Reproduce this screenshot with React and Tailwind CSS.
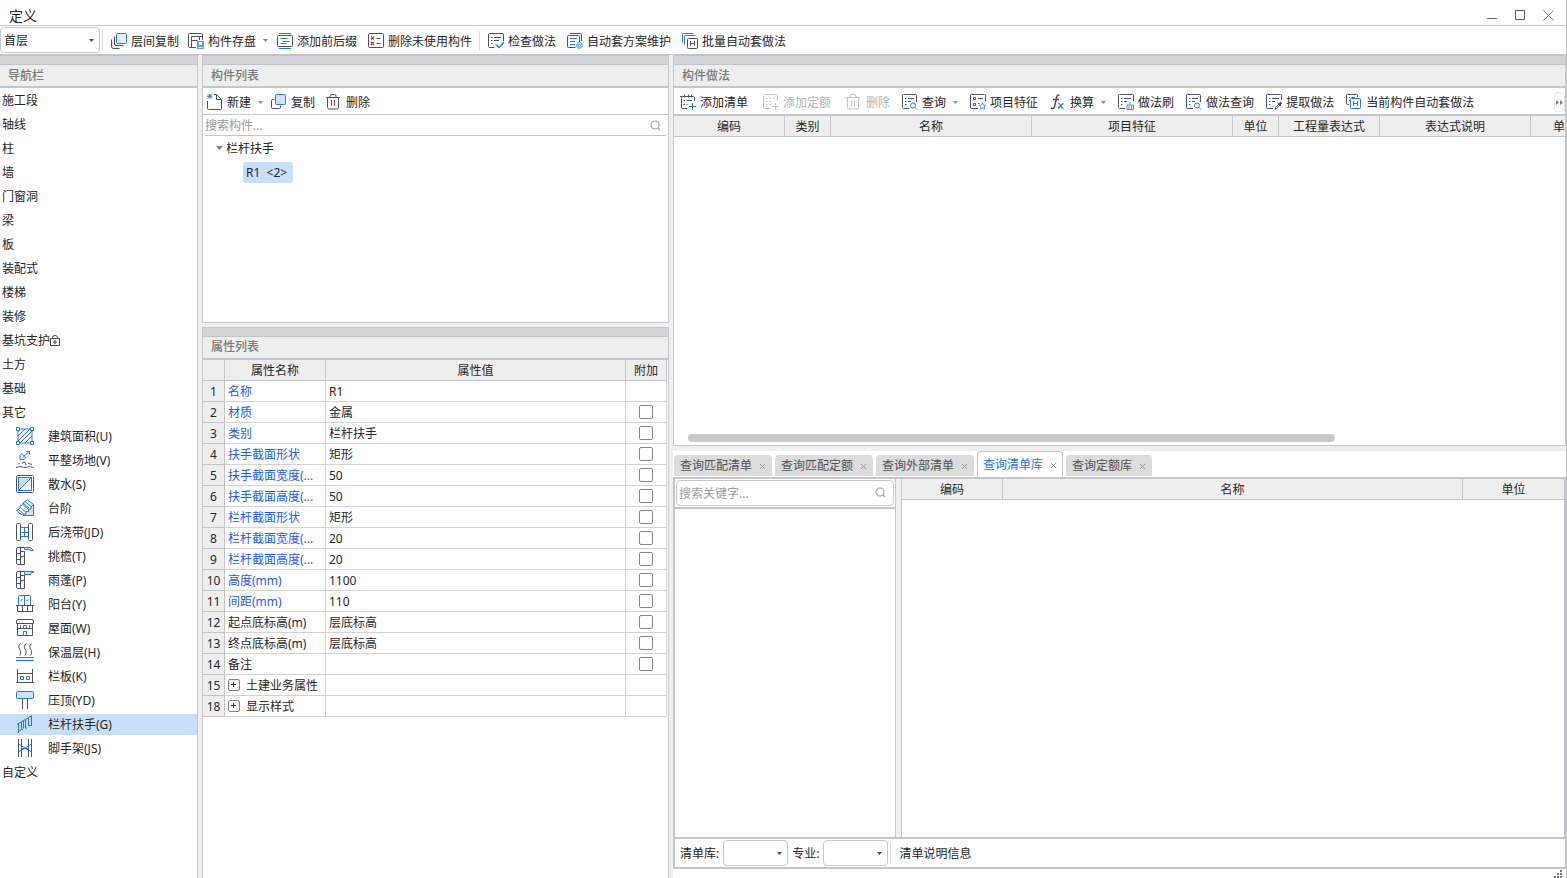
import { useState } from 'react';

const DARK = '#4b5068';
const BLUE = '#1f78e6';
const PALE = '#cfe1fb';

const Svg = ({ size = 16, children }) => (
  <svg
    width={size}
    height={size}
    viewBox={`0 0 ${size} ${size}`}
    fill="none"
    stroke={DARK}
    className="shrink-0"
    aria-hidden="true"
  >
    {children}
  </svg>
);

const Caret = ({ color = '#8a8a8a' }) => (
  <svg width="5" height="3" viewBox="0 0 5 3" className="shrink-0" aria-hidden="true">
    <path d="M0 0h5L2.500 3z" fill={color} />
  </svg>
);

const SearchIcon = () => (
  <svg width="11" height="11" viewBox="0 0 11 11" fill="none" stroke="#a3a3a3" className="shrink-0" aria-hidden="true">
    <circle cx="5" cy="5" r="4" strokeWidth="1.200" />
    <path d="M8 8l2 2" strokeWidth="1.400" />
  </svg>
);

const icons = {
  floorCopy: (
    <Svg>
      <path d="M3.500 3.500v7.500a1.500 1.500 0 0 0 1.500 1.500h7.500M.5 6.500v7a2 2 0 0 0 2 2h6" />
      <rect x="5.500" y=".5" width="10" height="10" rx="1" fill="#e3eefd" stroke={BLUE} />
    </Svg>
  ),
  save: (
    <Svg>
      <path d="M8 14.500H1.500a1 1 0 0 1-1-1v-12a1 1 0 0 1 1-1h12a1 1 0 0 1 1 1V7M3.500 14V3.500h8V7M3.500 7.500h6M11.500 3.500h3" />
      <path d="M9 8h7v8H9z" fill="#5b9cf0" stroke="none" />
      <path d="M11 9h3v3h-3zM10.500 14h4v1h-4z" fill="#fff" stroke="none" />
    </Svg>
  ),
  prefix: (
    <Svg>
      <rect x=".5" y="2.500" width="15" height="11" rx="1" />
      <path d="M2 .5h12M2 15.500h12M3.500 5.500h7M5.500 8.500h7M3.500 10.500h6" stroke={BLUE} />
    </Svg>
  ),
  removeUnused: (
    <Svg>
      <rect x=".5" y=".5" width="15" height="14" rx="1" />
      <path d="M8.500 5.500h4M8.500 10.500h4" />
      <path d="M3 3.500l3 3m0-3l-3 3M3 9l3 3m0-3l-3 3" stroke="#d93030" strokeWidth="1.200" />
    </Svg>
  ),
  check: (
    <Svg>
      <path d="M6.500 14.500h-5a1 1 0 0 1-1-1v-12a1 1 0 0 1 1-1h13a1 1 0 0 1 1 1V8M3 4.500h1.500M3 7.500h1.500M3 10.500h1.500M6 4.500h7M6 7.500h5" />
      <path d="M8 11.500l3 3 5-5" stroke={BLUE} strokeWidth="1.500" />
    </Svg>
  ),
  scheme: (
    <Svg>
      <path d="M8.500 14.500H1.500a1 1 0 0 1-1-1V3.500a1 1 0 0 1 1-1h10a1 1 0 0 1 1 1V9M3 .5h10.500a1 1 0 0 1 1 1V8" />
      <path d="M3 5.500h7M3 8.500h5M3 11.500h5" stroke={BLUE} />
      <circle cx="12.500" cy="12.500" r="3" fill="#a9cbf7" stroke="#5b9cf0" strokeDasharray="1.500 .8" />
      <circle cx="12.500" cy="12.500" r="1" fill="#fff" stroke="#5b9cf0" />
    </Svg>
  ),
  batch: (
    <Svg>
      <path d="M.5 9.500V1.500a1 1 0 0 1 1-1h10M2.500 11.500V3.500a1 1 0 0 1 1-1h10" stroke={BLUE} />
      <rect x="5.500" y="5.500" width="10" height="10" rx="1" fill="#fff" />
      <path d="M8.500 8v5M12.500 8v5M8.500 10.500h4" />
    </Svg>
  ),
  create: (
    <Svg>
      <path d="M.5 7v7.500a1 1 0 0 0 1 1h12a1 1 0 0 0 1-1V5.500l-5-5H7M9.500 1v4.500h5" />
      <path d="M.5 0l4.500 4.500M5 0L.5 4.500M0 2.300h5.500M2.800 0v5" stroke={BLUE} strokeWidth=".9" />
    </Svg>
  ),
  copy: (
    <Svg>
      <path d="M3.500 5.500h-2a1 1 0 0 0-1 1v7a1 1 0 0 0 1 1h7a1 1 0 0 0 1-1v-2" />
      <rect x="4.500" y=".5" width="10" height="10" rx="1" fill={PALE} stroke={BLUE} />
    </Svg>
  ),
  trash: (
    <Svg>
      <path d="M0 3.500h14M1.500 3.500v10a1.500 1.500 0 0 0 1.500 1.500h8a1.500 1.500 0 0 0 1.500-1.500v-10M4 3V2a1.500 1.500 0 0 1 1.500-1.500h3A1.500 1.500 0 0 1 10 2v1" />
      <path d="M5.500 6v6M8.500 6v6" stroke="#d93030" />
    </Svg>
  ),
  trashOff: (
    <Svg>
      <path
        d="M0 3.500h14M1.500 3.500v10a1.500 1.500 0 0 0 1.500 1.500h8a1.500 1.500 0 0 0 1.500-1.500v-10M4 3V2a1.500 1.500 0 0 1 1.500-1.500h3A1.500 1.500 0 0 1 10 2v1M5.500 6v6M8.500 6v6"
        stroke="#c3c3c3"
      />
    </Svg>
  ),
  addList: (
    <Svg>
      <path d="M7 14.500H2.500a1 1 0 0 1-1-1v-10a1 1 0 0 1 1-1h11a1 1 0 0 1 1 1V7M0 2.500h2M4.500.5v3M8.500.5v3M11.500.5v3M3.500 6.500h1.500M3.500 10.500h1.500M6.500 6.500H12M6.500 10.500h1" />
      <path d="M12.500 9v7M9 12.500h7" stroke={BLUE} />
    </Svg>
  ),
  addQuota: (
    <Svg>
      <path
        d="M7.500 14.500h-6a1 1 0 0 1-1-1v-12a1 1 0 0 1 1-1h12a1 1 0 0 1 1 1V7M3 4.500h1.500M6.500 4.500H8M10 4.500h1.500M3 7.500h1.500M6.500 7.500H8M3 10.500h1.500M6.500 10.500H8M12.500 9v7M9 12.500h7"
        stroke="#c3c3c3"
      />
    </Svg>
  ),
  query: (
    <Svg>
      <path d="M7 14.500H1.500a1 1 0 0 1-1-1v-12a1 1 0 0 1 1-1h12a1 1 0 0 1 1 1V8M3 4.500h1.500M3 7.500h1.500M3 10.500h1.500M6 4.500h6M6 7.500h3" />
      <circle cx="11" cy="11.500" r="2.500" stroke={BLUE} />
      <path d="M13 13.500l2 2" stroke={BLUE} />
    </Svg>
  ),
  feature: (
    <Svg>
      <path d="M8 14.500H1.500a1 1 0 0 1-1-1v-12a1 1 0 0 1 1-1h13a1 1 0 0 1 1 1V7M8 4.500h5M8 9.500h1.500" />
      <path d="M3.500 3.500h2v2h-2zM3.500 9.500h2v2h-2z" />
      <path d="M12.500 8.800l1 2.200 2.300.3-1.700 1.600.4 2.400-2-1.200-2 1.200.4-2.400-1.700-1.600 2.300-.3z" stroke="#4a93ef" />
    </Svg>
  ),
  convert: (
    <Svg>
      <path d="M9.500 1.500C7.500 0 6.800 2 6.300 4.500L4.700 12c-.5 2.500-1.700 3.200-3.700 2M3 5.500h6" strokeWidth="1.500" />
      <path d="M8 9.500c3-.8 2.500 5.500 5.500 4.500M13.500 9.500c-2 0-3.500 4.500-5.500 4.500" stroke={BLUE} strokeWidth="1.300" />
    </Svg>
  ),
  brush: (
    <Svg>
      <path d="M7 14.500H1.500a1 1 0 0 1-1-1v-12a1 1 0 0 1 1-1h13a1 1 0 0 1 1 1V7M3 4.500h1.500M3 7.500h1.500M3 10.500h1.500M6 4.500h7M6 7.500h3" />
      <path d="M12 8v2.500M9 11h6.500v4.500H9zM11 12v3.500M13.500 12v3.500" stroke="#4a8be8" />
    </Svg>
  ),
  extract: (
    <Svg>
      <path d="M7 14.500H1.500a1 1 0 0 1-1-1v-12a1 1 0 0 1 1-1h13a1 1 0 0 1 1 1V6M3 4.500h1.500M3 7.500h1.500M3 10.500h1.500M6 4.500h7M6 7.500h3" />
      <path d="M9 15.500l.5-2 3.500-3.500 1 1-3.500 3.500zM11.500 9l3.500 3" />
      <path d="M12.500 10l2-2 1.300 1.200-2 2z" fill={DARK} />
    </Svg>
  ),
  auto: (
    <Svg>
      <path d="M3 10.500H1.500a1 1 0 0 1-1-1v-8a1 1 0 0 1 1-1h9a1 1 0 0 1 1 1V3M3 3.500h1M5.500 3.500h3M3 6.500h1" />
      <rect x="4.500" y="4.500" width="10" height="10" rx="1" fill="#fff" stroke={BLUE} />
      <path d="M7.500 7v5M11.500 7v5M7.500 9.500h4" stroke={BLUE} />
    </Svg>
  ),
  area: (
    <Svg size={18}>
      <path d="M2 2h14v14H2zM2 9l7-7M2 14L14 2M4 16L16 4M9 16l7-7" stroke={BLUE} />
      <path d="M.5.500h3v3h-3zM14.500.500h3v3h-3zM.5 14.500h3v3h-3zM14.500 14.500h3v3h-3z" fill="#fff" stroke={BLUE} />
    </Svg>
  ),
  ground: (
    <Svg size={18}>
      <path d="M5.500 2.500l-1.500 2v4h4l2-2zM7.500 5.500l5.500-5M10.500.5h3v3" stroke={BLUE} fill="#eaf2fd" />
      <path d="M0 16.500c2.500 0 2.500-1 4-1s2.500 1 5 1 3-1 4.500-1 2 1 4.500 1M2 13.500l1.500-1.500M6 12.500l2-1.500 2 1.500M9 14l1.500-.5M12 12l2 1 2 .5" />
    </Svg>
  ),
  apron: (
    <Svg size={18}>
      <rect x=".5" y=".5" width="17" height="17" rx="1" />
      <path d="M2.500 15.500v-13h13z" fill={PALE} />
      <path d="M2.500 2.500h13v13h-13zM2.500 15.500l13-13" stroke={BLUE} />
    </Svg>
  ),
  stairs: (
    <Svg size={18}>
      <path d="M7 16.500h10.500V5.500L15 8v2h-2.500v2.500H10V15H7z" fill={PALE} stroke={BLUE} />
      <path
        d="M11.500 1L7 4v1.500L4 7v2L.5 11.500 6 16M11.500 1l6 4.500M7 4l6 5M4 8l5.500 5M7 5.500l5.500 5M9 2.500l6 5M2 10l5.500 5"
        stroke={BLUE}
      />
    </Svg>
  ),
  strip: (
    <Svg size={18}>
      <rect x=".5" y=".5" width="4" height="17" rx="1" />
      <rect x="12.500" y=".5" width="4" height="17" rx="1" />
      <path d="M4.500 4.500h8M4.500 9.500h8M4.500 13.500h8M8.500 4v10" stroke={BLUE} />
    </Svg>
  ),
  eave: (
    <Svg size={18}>
      <path d="M8.500 4v13.500H2A1.500 1.500 0 0 1 .5 16V2A1.500 1.500 0 0 1 2 .5h6M4.500.5v17M.5 6.500h4M.5 12.500h4M4.500 4.500h4M4.500 9.500h4" />
      <path d="M8.500.5h6l3 3H15l-2-1H8.500z" fill={PALE} stroke={BLUE} />
    </Svg>
  ),
  canopy: (
    <Svg size={18}>
      <path d="M8.500 4v13.500H2A1.500 1.500 0 0 1 .5 16V2A1.500 1.500 0 0 1 2 .5h6M4.500.5v17M.5 6.500h4M.5 12.500h4M4.500 4.500h4M4.500 9.500h4" />
      <path d="M8.500.5h9v1h-2l-1 2h-6z" fill={PALE} stroke={BLUE} />
    </Svg>
  ),
  balcony: (
    <Svg size={18}>
      <path d="M2.500 10V1.500a1 1 0 0 1 1-1h10a1 1 0 0 1 1 1V10M8.500.5V10M4.500 6l2-2M10.500 6l2-2" stroke={BLUE} />
      <path d="M0 10.500h18M1 16.500h16M1.500 10.500v6M6.500 10.500v6M11.500 10.500v6M16.500 10.500v6" />
    </Svg>
  ),
  roof: (
    <Svg size={18}>
      <path d="M2 .5h14a1.500 1.500 0 0 1 1.500 1.500v2.500h-17V2A1.500 1.500 0 0 1 2 .5zM1.500 4v12.500h15V4M1.500 9.500h15" />
      <path d="M4.500 6v3.500M7.500 9.500v-3h3v3M13.500 6v3.500M7.500 16.500v-4h3v4" stroke={BLUE} />
    </Svg>
  ),
  heat: (
    <Svg size={18}>
      <path d="M4.500.500c-5 4.500 3 6.500-1 12M10 .5c-5 4.500 3 6.500-1 12M15.500.500c-5 4.500 3 6.500-1 12" />
      <path d="M0 14.500h18M0 17.500h18" stroke={BLUE} />
    </Svg>
  ),
  railBoard: (
    <Svg size={18}>
      <path d="M1.500 2v13.500M16.500 2v13.500M1.500 6.500h15M0 15.500h18" />
      <path d="M4.500 9.500h3v3h-3zM10.500 9.500h3v3h-3z" stroke={BLUE} />
    </Svg>
  ),
  coping: (
    <Svg size={18}>
      <path d="M6.500 7.500V18M11.500 7.500V18" />
      <rect x=".5" y=".5" width="17" height="7" rx="1" fill={PALE} stroke={BLUE} />
    </Svg>
  ),
  handrail: (
    <Svg size={18}>
      <path
        d="M1 9.500L16 .5M2.500 8.500v9M5.500 7v7.500M9.500 4.500v8.500M12.500 3v7.500M15.500 1v9.500M1.500 17.500h1.500M5 14.500h2M9 13h2M12 10.500h3.500M3 16l2.500-1.500M7.500 6v7.500"
        stroke={BLUE}
      />
    </Svg>
  ),
  scaffold: (
    <Svg size={18}>
      <path d="M2.500 0v18M5.500 0v18M12.500 0v18M15.500 0v18" />
      <path d="M2.500 5l13 8M2.500 13l13-8M5.500 9.500h7" stroke={BLUE} />
    </Svg>
  ),
  lock: (
    <svg width="10" height="12" viewBox="0 0 10 12" fill="none" stroke="#444" aria-hidden="true">
      <path d="M.5 3.500h9v7h-9zM2.500 3.500v-1a2.500 2 0 0 1 5 0v1M5 5v4M3 7h4" />
    </svg>
  )
};

const categories = ['施工段', '轴线', '柱', '墙', '门窗洞', '梁', '板', '装配式', '楼梯', '装修', '基坑支护', '土方', '基础', '其它'];

const others = [
  { label: '建筑面积(U)', icon: 'area' },
  { label: '平整场地(V)', icon: 'ground' },
  { label: '散水(S)', icon: 'apron' },
  { label: '台阶', icon: 'stairs' },
  { label: '后浇带(JD)', icon: 'strip' },
  { label: '挑檐(T)', icon: 'eave' },
  { label: '雨蓬(P)', icon: 'canopy' },
  { label: '阳台(Y)', icon: 'balcony' },
  { label: '屋面(W)', icon: 'roof' },
  { label: '保温层(H)', icon: 'heat' },
  { label: '栏板(K)', icon: 'railBoard' },
  { label: '压顶(YD)', icon: 'coping' },
  { label: '栏杆扶手(G)', icon: 'handrail' },
  { label: '脚手架(JS)', icon: 'scaffold' }
];

const properties = [
  { no: 1, name: '名称', value: 'R1', blue: true },
  { no: 2, name: '材质', value: '金属', blue: true, check: true },
  { no: 3, name: '类别', value: '栏杆扶手', blue: true, check: true },
  { no: 4, name: '扶手截面形状', value: '矩形', blue: true, check: true },
  { no: 5, name: '扶手截面宽度(...', value: '50', blue: true, check: true },
  { no: 6, name: '扶手截面高度(...', value: '50', blue: true, check: true },
  { no: 7, name: '栏杆截面形状', value: '矩形', blue: true, check: true },
  { no: 8, name: '栏杆截面宽度(...', value: '20', blue: true, check: true },
  { no: 9, name: '栏杆截面高度(...', value: '20', blue: true, check: true },
  { no: 10, name: '高度(mm)', value: '1100', blue: true, check: true },
  { no: 11, name: '间距(mm)', value: '110', blue: true, check: true },
  { no: 12, name: '起点底标高(m)', value: '层底标高', check: true },
  { no: 13, name: '终点底标高(m)', value: '层底标高', check: true },
  { no: 14, name: '备注', value: '', check: true },
  { no: 15, name: '土建业务属性', value: '', group: true },
  { no: 18, name: '显示样式', value: '', group: true }
];

const tabs = ['查询匹配清单', '查询匹配定额', '查询外部清单', '查询清单库', '查询定额库'];

function ToolButton({ icon, label, menu, disabled }) {
  return (
    <button
      type="button"
      disabled={disabled}
      className="flex shrink-0 items-center gap-1 whitespace-nowrap disabled:text-[#b4b4b4]"
    >
      {icons[icon]}
      <span className="pt-[2px]">{label}</span>
      {menu && (
        <span className="flex w-2 justify-end">
          <Caret />
        </span>
      )}
    </button>
  );
}

function PanelTitle({ children }) {
  return (
    <div className="shrink-0 border-b-2 border-[#c5c6cb]">
      <div className="h-[10px] border-y border-[#c1c4cb] bg-[#d3d4da]" />
      <h2 className="flex h-[21px] items-center bg-[#eeeeee] px-2 font-medium text-[#7a7a7a]">{children}</h2>
    </div>
  );
}

function Dropdown({ label, options, className }) {
  return (
    <span className={`relative flex h-[26px] items-center ${className}`}>
      <select
        aria-label={label}
        className="h-full w-full appearance-none rounded border border-[#c8c8c8] bg-white pt-[2px] pl-[3px] outline-none"
      >
        {options.map((option) => (
          <option key={option}>{option}</option>
        ))}
      </select>
      <span className="pointer-events-none absolute right-[6px]">
        <Caret color="#4b5068" />
      </span>
    </span>
  );
}

function HeaderTable({ columns }) {
  return (
    <table className="w-full table-fixed border-separate border-spacing-0">
      <colgroup>
        {columns.map((col) => (
          <col key={col.label} className={col.width} />
        ))}
      </colgroup>
      <thead>
        <tr>
          {columns.map((col) => (
            <th
              key={col.label}
              className={`h-[21px] border-b border-[#c3c4c8] bg-[#eeeeee] p-0 pt-[2px] font-normal ${col.cell || 'border-r'}`}
            >
              {col.label}
            </th>
          ))}
        </tr>
      </thead>
    </table>
  );
}

function NavPanel() {
  const [selected, setSelected] = useState('栏杆扶手(G)');

  return (
    <nav className="flex w-[198px] shrink-0 flex-col border-r border-[#c5c6cb] bg-white">
      <PanelTitle>导航栏</PanelTitle>
      <ul>
        {categories.map((name) => (
          <li key={name} className="flex h-6 items-center pt-[2px] pl-[2px]">
            {name}
            {name === '基坑支护' && icons.lock}
          </li>
        ))}
        {others.map((item) => (
          <li key={item.label} className="flex h-6 items-center">
            <button
              type="button"
              onClick={() => setSelected(item.label)}
              className={`flex h-[21px] w-full items-center gap-[14px] pl-4 text-left ${
                selected === item.label ? 'bg-[#c8dffa]' : ''
              }`}
            >
              {icons[item.icon]}
              <span className="pt-[2px]">{item.label}</span>
            </button>
          </li>
        ))}
        <li className="flex h-6 items-center pt-[2px] pl-[2px]">自定义</li>
      </ul>
    </nav>
  );
}

function ComponentList() {
  return (
    <section className="flex min-h-0 flex-[267_1_0%] flex-col border-x border-b border-[#c5c6cb] bg-white">
      <PanelTitle>构件列表</PanelTitle>
      <div className="flex h-[27px] shrink-0 items-center gap-[11px] border-b border-[#c5c6cb] px-1 pt-[2px]">
        <div className="flex items-center gap-2">
          <ToolButton icon="create" label="新建" menu />
          <ToolButton icon="copy" label="复制" />
        </div>
        <ToolButton icon="trash" label="删除" />
      </div>
      <label className="flex h-[21px] shrink-0 items-center rounded border-b border-[#c5c6cb] pr-[7px] pl-[2px]">
        <input
          type="text"
          aria-label="搜索构件"
          placeholder="搜索构件..."
          className="min-w-0 flex-1 pt-[2px] outline-none placeholder:text-[#9b9b9b]"
        />
        <SearchIcon />
      </label>
      <div className="flex h-6 shrink-0 items-center gap-[3px] pl-[13px]">
        <svg width="7" height="4" viewBox="0 0 7 4" aria-hidden="true">
          <path d="M0 0h7L3.500 4z" fill="#808080" />
        </svg>
        <span className="pt-[2px]">栏杆扶手</span>
      </div>
      <div className="flex h-6 shrink-0 items-center pl-10">
        <button type="button" className="h-[21px] rounded-[3px] bg-[#c8dffa] pt-[2px] pr-[6px] pl-[3px] whitespace-pre">
          {'R1  <2>'}
        </button>
      </div>
    </section>
  );
}

function PropertyList() {
  return (
    <section className="flex min-h-0 flex-[552_1_0%] flex-col border-x border-[#c5c6cb] bg-white">
      <PanelTitle>属性列表</PanelTitle>
      <div className="pr-px">
        <table className="w-full table-fixed border-separate border-spacing-0">
          <colgroup>
            <col className="w-[22px]" />
            <col className="w-[101px]" />
            <col />
            <col className="w-[41px]" />
          </colgroup>
          <thead>
            <tr>
              {['', '属性名称', '属性值', '附加'].map((title) => (
                <th
                  key={title}
                  className="h-[21px] border-r border-b border-[#c3c4c8] bg-[#eeeeee] p-0 pt-[2px] font-normal"
                >
                  {title}
                </th>
              ))}
            </tr>
          </thead>
          <tbody>
            {properties.map((row) => (
              <tr key={row.no}>
                <td className="h-[21px] border-r border-b border-[#c3c4c8] bg-[#eeeeee] p-0 pt-[2px] text-center">
                  {row.no}
                </td>
                <td
                  className={`h-[21px] overflow-hidden border-r border-b border-[#d4d4d4] p-0 pl-[3px] whitespace-nowrap ${
                    row.blue ? 'text-[#1a5cff]' : ''
                  }`}
                >
                  <span className="flex items-center">
                    {row.group && (
                      <button
                        type="button"
                        aria-label={`展开${row.name}`}
                        className="mr-[6px] flex size-3 items-center justify-center rounded-[2px] border border-[#858585]"
                      >
                        <svg width="6" height="5" viewBox="0 0 6 5" stroke="#333" aria-hidden="true">
                          <path d="M0 2.500h5M2.500 0v5" />
                        </svg>
                      </button>
                    )}
                    <span className="pt-[2px]">{row.name}</span>
                  </span>
                </td>
                <td className="h-[21px] border-r border-b border-[#d4d4d4] p-0 pt-[2px] pl-[3px]">{row.value}</td>
                <td className="h-[21px] border-r border-b border-[#d4d4d4] p-0">
                  {row.check && (
                    <input
                      type="checkbox"
                      aria-label={`附加${row.name}`}
                      className="mx-auto block size-[14px] appearance-none rounded-[2px] border border-[#868686] bg-white checked:bg-[#1f78e6]"
                    />
                  )}
                </td>
              </tr>
            ))}
          </tbody>
        </table>
      </div>
    </section>
  );
}

function MethodPanel() {
  return (
    <section className="flex min-h-0 flex-[390_1_0%] flex-col border-x border-b border-[#c5c6cb] bg-white">
      <PanelTitle>构件做法</PanelTitle>
      <div className="flex h-7 shrink-0 items-center justify-between border-b-2 border-[#c5c6cb] pt-[2px] pl-[6px]">
        <div className="flex min-w-0 items-center gap-3 overflow-hidden">
          <div className="flex shrink-0 items-center gap-[15px]">
            <ToolButton icon="addList" label="添加清单" />
            <ToolButton icon="addQuota" label="添加定额" disabled />
            <ToolButton icon="trashOff" label="删除" disabled />
          </div>
          <ToolButton icon="query" label="查询" menu />
          <ToolButton icon="feature" label="项目特征" />
          <ToolButton icon="convert" label="换算" menu />
          <ToolButton icon="brush" label="做法刷" />
          <ToolButton icon="query" label="做法查询" />
          <ToolButton icon="extract" label="提取做法" />
          <ToolButton icon="auto" label="当前构件自动套做法" />
        </div>
        <button
          type="button"
          aria-label="更多"
          className="flex h-5 w-[11px] shrink-0 items-center justify-center rounded border border-[#e6e6e6]"
        >
          <svg width="7" height="5" viewBox="0 0 7 5" fill="#7d7d7d" aria-hidden="true">
            <path d="M0 0l3 2.500L0 5zM4 0l3 2.500L4 5z" />
          </svg>
        </button>
      </div>
      <HeaderTable
        columns={[
          { label: '编码', width: 'w-[111px]' },
          { label: '类别', width: 'w-[46px]' },
          { label: '名称', width: 'w-[201px]' },
          { label: '项目特征', width: 'w-[201px]' },
          { label: '单位', width: 'w-[46px]' },
          { label: '工程量表达式', width: 'w-[101px]' },
          { label: '表达式说明', width: 'w-[151px]' },
          { label: '单', width: '', cell: 'text-right' }
        ]}
      />
      <div className="flex flex-1 items-end px-[14px] pb-[3px]">
        <div className="h-2 w-3/4 rounded-full bg-[#c9c9c9]" />
      </div>
    </section>
  );
}

function QueryPanel() {
  const [active, setActive] = useState('查询清单库');

  return (
    <section className="flex min-h-0 flex-[428_1_0%] flex-col bg-white">
      <div className="flex h-[26px] shrink-0 items-end gap-[3px] pl-px">
        {tabs.map((tab) => (
          <div
            key={tab}
            className={
              active === tab
                ? 'flex h-[26px] items-center gap-[7px] rounded-t border border-b-0 border-[#c5c6cb] bg-white px-[5px] pt-[2px] text-[#1f78e6]'
                : 'mb-px flex h-[21px] items-center gap-[7px] rounded-t bg-[#dcdcdc] px-[6px] pt-[2px] text-[#505050]'
            }
          >
            <button type="button" onClick={() => setActive(tab)}>
              {tab}
            </button>
            <button type="button" aria-label={`关闭${tab}`}>
              <svg width="7" height="7" viewBox="0 0 7 7" stroke="#9a9a9a" aria-hidden="true">
                <path d="M1 1l5 5M6 1L1 6" />
              </svg>
            </button>
          </div>
        ))}
      </div>
      <div className="flex min-h-0 flex-1 flex-col border-y-2 border-r border-l-2 border-[#c5c6cb]">
        <div className="flex min-h-0 flex-1 gap-[5px] bg-[#efefef]">
          <div className="flex w-[221px] shrink-0 flex-col border-r border-[#c5c6cb] bg-white">
            <div className="border-b-2 border-[#c5c6cb] p-px">
              <label className="flex h-[26px] items-center rounded border border-[#c8c8c8] pr-[7px] pl-[2px]">
                <input
                  type="text"
                  aria-label="搜索关键字"
                  placeholder="搜索关键字..."
                  className="min-w-0 flex-1 pt-[2px] outline-none placeholder:text-[#9b9b9b]"
                />
                <SearchIcon />
              </label>
            </div>
          </div>
          <div className="min-w-0 flex-1 border-x border-[#c5c6cb] bg-white">
            <HeaderTable
              columns={[
                { label: '编码', width: 'w-[101px]' },
                { label: '名称', width: '' },
                { label: '单位', width: 'w-[101px]', cell: 'border-r-0' }
              ]}
            />
          </div>
        </div>
        <div className="flex h-[30px] shrink-0 items-center border-t-2 border-[#c5c6cb] pl-[5px]">
          <span className="pt-[2px]">清单库:</span>
          <Dropdown label="清单库" options={['']} className="ml-1 w-[65px]" />
          <span className="ml-1 pt-[2px]">专业:</span>
          <Dropdown label="专业" options={['']} className="ml-1 w-[65px]" />
          <span className="ml-[2px] h-5 w-px bg-[#dcdcdc]" />
          <span className="ml-2 pt-[2px]">清单说明信息</span>
        </div>
      </div>
      <div className="flex h-[9px] shrink-0 items-end justify-end pr-[3px]">
        <svg width="9" height="8" viewBox="0 0 9 8" fill="#777" aria-hidden="true">
          <path d="M6 0h2v2H6zM3 3h2v2H3zM6 3h2v2H6zM0 6h2v2H0zM3 6h2v2H3zM6 6h2v2H6z" />
        </svg>
      </div>
    </section>
  );
}

export default function App() {
  return (
    <div className="flex h-screen flex-col overflow-hidden border-r border-[#c5c6cb] bg-[#efefef] font-['Noto_Sans','Noto_Sans_CJK_SC',sans-serif] text-xs leading-4 text-[#262626]">
      <header className="flex h-[26px] shrink-0 items-center justify-between border-b border-[#c8c8c8] bg-white pt-[6px] pr-3 pl-[9px]">
        <h1 className="text-sm">定义</h1>
        <div className="flex items-center gap-[18px]">
          <button type="button" aria-label="最小化">
            <svg width="10" height="11" viewBox="0 0 10 11" stroke="#666" aria-hidden="true">
              <path d="M0 8.500h10" />
            </svg>
          </button>
          <button type="button" aria-label="最大化">
            <svg width="10" height="11" viewBox="0 0 10 11" fill="none" stroke="#555" aria-hidden="true">
              <path d="M.5.500h9v9h-9z" />
            </svg>
          </button>
          <button type="button" aria-label="关闭">
            <svg width="11" height="11" viewBox="0 0 11 11" stroke="#777" aria-hidden="true">
              <path d="M.5.500l10 10M10.500.500l-10 10" />
            </svg>
          </button>
        </div>
      </header>

      <div className="flex h-[29px] shrink-0 items-center gap-[11px] border-b border-[#c1c4cb] bg-white">
        <div className="flex items-center gap-[2px]">
          <Dropdown label="楼层" options={['首层']} className="w-[100px]" />
          <span className="h-5 w-px bg-[#dcdcdc]" />
        </div>
        <div className="-ml-[3px] flex items-center gap-[11px] pt-px">
          <div className="flex items-center gap-[9px]">
            <ToolButton icon="floorCopy" label="层间复制" />
            <ToolButton icon="save" label="构件存盘" menu />
            <ToolButton icon="prefix" label="添加前后缀" />
          </div>
          <ToolButton icon="removeUnused" label="删除未使用构件" />
        </div>
        <div className="-ml-1 flex items-center gap-2 pt-px">
          <span className="h-5 w-px bg-[#dcdcdc]" />
          <ToolButton icon="check" label="检查做法" />
        </div>
        <div className="flex items-center gap-[11px] pt-px">
          <ToolButton icon="scheme" label="自动套方案维护" />
          <ToolButton icon="batch" label="批量自动套做法" />
        </div>
      </div>

      <main className="flex min-h-0 flex-1 gap-1">
        <NavPanel />
        <div className="flex w-[467px] shrink-0 flex-col gap-1">
          <ComponentList />
          <PropertyList />
        </div>
        <div className="flex min-w-0 flex-1 flex-col gap-[5px]">
          <MethodPanel />
          <QueryPanel />
        </div>
      </main>
    </div>
  );
}
